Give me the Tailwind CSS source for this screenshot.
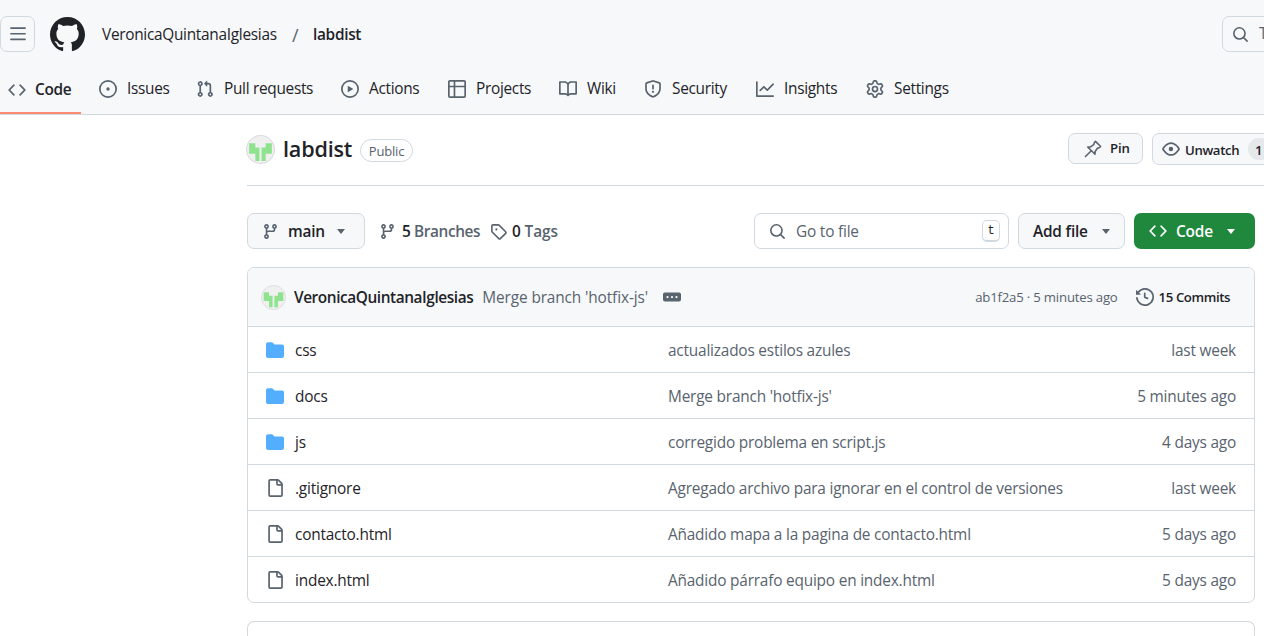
<!DOCTYPE html>
<html><head><meta charset="utf-8"><title>labdist</title>
<script src="https://cdn.jsdelivr.net/npm/@tailwindcss/browser@4"></script></head>
<body class="bg-white overflow-hidden h-[636px] w-[1264px] text-[#1f2328] text-[15.4px] font-['Open_Sans','Noto_Sans',sans-serif] tracking-[-0.2px]">
<svg width="0" height="0" class="absolute"><defs>
<symbol id="code" viewBox="0 0 16 16"><path d="m11.28 3.22 4.25 4.25a.75.75 0 0 1 0 1.06l-4.25 4.25a.749.749 0 0 1-1.275-.326.749.749 0 0 1 .215-.734L13.94 8l-3.72-3.72a.749.749 0 0 1 .326-1.275.749.749 0 0 1 .734.215Zm-6.56 0a.751.751 0 0 1 1.042.018.751.751 0 0 1 .018 1.042L2.06 8l3.72 3.72a.749.749 0 0 1-.326 1.275.749.749 0 0 1-.734-.215L.47 8.53a.75.75 0 0 1 0-1.06Z"/></symbol>
<symbol id="branch" viewBox="0 0 16 16"><path d="M9.5 3.25a2.25 2.25 0 1 1 3 2.122V6A2.5 2.5 0 0 1 10 8.5H6a1 1 0 0 0-1 1v1.128a2.251 2.251 0 1 1-1.5 0V5.372a2.25 2.25 0 1 1 1.5 0v1.836A2.493 2.493 0 0 1 6 7h4a1 1 0 0 0 1-1v-.628A2.25 2.25 0 0 1 9.5 3.25Zm-6 0a.75.75 0 1 0 1.5 0 .75.75 0 0 0-1.5 0Zm8.25-.75a.75.75 0 1 0 0 1.5.75.75 0 0 0 0-1.5ZM4.25 12a.75.75 0 1 0 0 1.5.75.75 0 0 0 0-1.5Z"/></symbol>
<symbol id="search" viewBox="0 0 16 16"><path d="M10.68 11.74a6 6 0 0 1-7.922-8.982 6 6 0 0 1 8.982 7.922l3.04 3.04a.749.749 0 0 1-.326 1.275.749.749 0 0 1-.734-.215ZM11.5 7a4.499 4.499 0 1 0-8.997 0A4.499 4.499 0 0 0 11.5 7Z"/></symbol>
<symbol id="folder" viewBox="0 0 16 16"><path d="M1.75 1A1.75 1.75 0 0 0 0 2.75v10.5C0 14.216.784 15 1.75 15h12.5A1.75 1.75 0 0 0 16 13.25v-8.5A1.75 1.75 0 0 0 14.25 3H7.5a.25.25 0 0 1-.2-.1l-.9-1.2C6.07 1.26 5.55 1 5 1H1.75Z"/></symbol>
<symbol id="file" viewBox="0 0 16 16"><path d="M2 1.75C2 .784 2.784 0 3.75 0h6.586c.464 0 .909.184 1.237.513l2.914 2.914c.329.328.513.773.513 1.237v9.586A1.75 1.75 0 0 1 13.25 16h-9.5A1.75 1.75 0 0 1 2 14.25Zm1.75-.25a.25.25 0 0 0-.25.25v12.5c0 .138.112.25.25.25h9.5a.25.25 0 0 0 .25-.25V6h-2.75A1.75 1.75 0 0 1 9 4.25V1.5Zm6.75.062V4.25c0 .138.112.25.25.25h2.688l-.011-.013-2.914-2.914-.013-.011Z"/></symbol>
<symbol id="avatar" viewBox="0 0 28 28"><circle cx="14" cy="14" r="13.5" fill="#f0f0f0" stroke="#dcdcdc"/><path d="M3 8h6v4h4v13H9v-7H3ZM25 8h-6v4h-4v13h4v-7h6Z" fill="#8fe38f"/></symbol>
</defs></svg>

<header class="bg-[#f6f8fa] border-b border-[#d1d9e0] h-[115px] flex flex-col">
  <div class="h-[68px] flex items-center [&>span]:pt-[2px]">
    <button class="w-[35px] h-[36px] ml-0 rounded-[7px] border border-[#d1d9e0] flex items-center justify-center" aria-label="menu">
      <svg class="w-[18px] h-[18px] fill-[#59636e]" viewBox="0 0 16 16"><path d="M1 2.75A.75.75 0 0 1 1.75 2h12.5a.75.75 0 0 1 0 1.5H1.75A.75.75 0 0 1 1 2.75Zm0 5A.75.75 0 0 1 1.75 7h12.5a.75.75 0 0 1 0 1.5H1.75A.75.75 0 0 1 1 7.75ZM1.75 12h12.5a.75.75 0 0 1 0 1.5H1.75a.75.75 0 0 1 0-1.5Z"/></svg>
    </button>
    <svg class="w-[35px] h-[35px] ml-[15px] fill-[#1f2328]" viewBox="0 0 16 16"><path d="M8 0c4.42 0 8 3.58 8 8a8.013 8.013 0 0 1-5.45 7.59c-.4.08-.55-.17-.55-.38 0-.27.01-1.13.01-2.2 0-.75-.25-1.23-.54-1.48 1.78-.2 3.65-.88 3.65-3.95 0-.88-.31-1.59-.82-2.15.08-.2.36-1.02-.08-2.12 0 0-.67-.22-2.2.82-.64-.18-1.32-.27-2-.27-.68 0-1.36.09-2 .27-1.53-1.03-2.2-.82-2.2-.82-.44 1.1-.16 1.92-.08 2.12-.51.56-.82 1.28-.82 2.15 0 3.06 1.86 3.75 3.64 3.95-.23.2-.44.55-.51 1.07-.46.21-1.61.55-2.33-.66-.15-.24-.6-.83-1.23-.82-.67.01-.27.38.01.53.34.19.73.9.82 1.13.16.45.68 1.31 2.69.94 0 .67.01 1.3.01 1.49 0 .21-.15.45-.55.38A7.995 7.995 0 0 1 0 8c0-4.42 3.58-8 8-8Z"/></svg>
    <span class="ml-[17px] w-[190px] tracking-[-0.29px]">VeronicaQuintanaIglesias</span>
    <span class="text-[#59636e] text-[18px] w-[21px]">/</span>
    <span class="font-semibold tracking-[-0.3px]">labdist</span>
    <div class="ml-auto w-[60px] mr-[-18px] h-[36px] rounded-[7px] border border-[#d1d9e0] flex items-center pl-[9px] gap-[10px] text-[#59636e]">
      <svg class="w-[17px] h-[17px] shrink-0 fill-[#59636e]"><use href="#search"/></svg><span>T</span>
    </div>
  </div>
  <nav class="h-[46px] flex text-[15.4px] tracking-[-0.3px]">
    <a class="w-[81px] pl-[8px] gap-[9px] flex items-center h-[46px] pb-[1px] border-b-2 border-[#fd8c73] font-semibold shrink-0">
      <svg class="w-[18px] h-[18px] fill-[#59636e] shrink-0"><use href="#code"/></svg>Code</a>
    <a class="ml-[18px] w-[97px] pb-[4px] gap-[10px] flex items-center shrink-0"><svg class="w-[18px] h-[18px] fill-[#59636e] shrink-0" viewBox="0 0 16 16"><path d="M8 9.5a1.5 1.5 0 1 0 0-3 1.5 1.5 0 0 0 0 3Z"/><path d="M8 0a8 8 0 1 1 0 16A8 8 0 0 1 8 0ZM1.5 8a6.5 6.5 0 1 0 13 0 6.5 6.5 0 0 0-13 0Z"/></svg>Issues</a>
    <a class="w-[145px] pb-[4px] gap-[10px] flex items-center shrink-0"><svg class="w-[18px] h-[18px] fill-[#59636e] shrink-0" viewBox="0 0 16 16"><path d="M1.5 3.25a2.25 2.25 0 1 1 3 2.122v5.256a2.251 2.251 0 1 1-1.5 0V5.372A2.25 2.25 0 0 1 1.5 3.25Zm5.677-.177L9.573.677A.25.25 0 0 1 10 .854V2.5h1A2.5 2.5 0 0 1 13.5 5v5.628a2.251 2.251 0 1 1-1.5 0V5a1 1 0 0 0-1-1h-1v1.646a.25.25 0 0 1-.427.177L7.177 3.427a.25.25 0 0 1 0-.354ZM3.75 2.5a.75.75 0 1 0 0 1.5.75.75 0 0 0 0-1.5Zm0 9.5a.75.75 0 1 0 0 1.5.75.75 0 0 0 0-1.5Zm8.25.75a.75.75 0 1 0 1.5 0 .75.75 0 0 0-1.5 0Z"/></svg>Pull requests</a>
    <a class="w-[107px] pb-[4px] gap-[10px] flex items-center shrink-0"><svg class="w-[18px] h-[18px] fill-[#59636e] shrink-0" viewBox="0 0 16 16"><path d="M8 0a8 8 0 1 1 0 16A8 8 0 0 1 8 0ZM1.5 8a6.5 6.5 0 1 0 13 0 6.5 6.5 0 0 0-13 0Zm4.879-2.773 4.264 2.559a.25.25 0 0 1 0 .428l-4.264 2.559A.25.25 0 0 1 6 10.559V5.442a.25.25 0 0 1 .379-.215Z"/></svg>Actions</a>
    <a class="w-[111px] pb-[4px] gap-[10px] flex items-center shrink-0"><svg class="w-[18px] h-[18px] fill-[#59636e] shrink-0" viewBox="0 0 16 16"><path d="M0 1.75C0 .784.784 0 1.75 0h12.5C15.216 0 16 .784 16 1.75v12.5A1.75 1.75 0 0 1 14.25 16H1.75A1.75 1.75 0 0 1 0 14.25ZM6.5 6.5v8h7.75a.25.25 0 0 0 .25-.25V6.5Zm8-1.5V1.75a.25.25 0 0 0-.25-.25H6.5V5Zm-13 1.5v7.75c0 .138.112.25.25.25H5v-8ZM5 5V1.5H1.75a.25.25 0 0 0-.25.25V5Z"/></svg>Projects</a>
    <a class="w-[85px] pb-[4px] gap-[10px] flex items-center shrink-0"><svg class="w-[18px] h-[18px] fill-[#59636e] shrink-0" viewBox="0 0 16 16"><path d="M0 1.75A.75.75 0 0 1 .75 1h4.253c1.227 0 2.317.59 3 1.501A3.743 3.743 0 0 1 11.006 1h4.245a.75.75 0 0 1 .75.75v10.5a.75.75 0 0 1-.75.75h-4.507a2.25 2.25 0 0 0-1.591.659l-.622.621a.75.75 0 0 1-1.06 0l-.622-.621A2.25 2.25 0 0 0 5.258 13H.75a.75.75 0 0 1-.75-.75Zm7.251 10.324.004-5.073-.002-2.253A2.25 2.25 0 0 0 5.003 2.5H1.5v9h3.757a3.75 3.75 0 0 1 1.994.574ZM8.755 4.75l-.004 7.322a3.752 3.752 0 0 1 1.992-.572H14.5v-9h-3.495a2.25 2.25 0 0 0-2.25 2.25Z"/></svg>Wiki</a>
    <a class="w-[112px] pb-[4px] gap-[10px] flex items-center shrink-0"><svg class="w-[18px] h-[18px] fill-[#59636e] shrink-0" viewBox="0 0 16 16"><path d="M7.467.133a1.748 1.748 0 0 1 1.066 0l5.25 1.68A1.75 1.75 0 0 1 15 3.48V7c0 1.566-.32 3.182-1.303 4.682-.983 1.498-2.585 2.813-5.032 3.855a1.697 1.697 0 0 1-1.33 0c-2.447-1.042-4.049-2.357-5.032-3.855C1.32 10.182 1 8.566 1 7V3.48a1.75 1.75 0 0 1 1.217-1.667Zm.61 1.429a.25.25 0 0 0-.153 0l-5.25 1.68a.25.25 0 0 0-.174.238V7c0 1.358.275 2.666 1.057 3.86.784 1.194 2.121 2.34 4.366 3.297a.196.196 0 0 0 .154 0c2.245-.956 3.582-2.104 4.366-3.298C13.225 9.666 13.5 8.36 13.5 7V3.48a.251.251 0 0 0-.174-.237l-5.25-1.68ZM8.75 4.75v3a.75.75 0 0 1-1.5 0v-3a.75.75 0 0 1 1.5 0ZM9 10.5a1 1 0 1 1-2 0 1 1 0 0 1 2 0Z"/></svg>Security</a>
    <a class="w-[110px] pb-[4px] gap-[10px] flex items-center shrink-0"><svg class="w-[18px] h-[18px] fill-[#59636e] shrink-0" viewBox="0 0 16 16"><path d="M1.5 1.75V13.5h13.75a.75.75 0 0 1 0 1.5H.75a.75.75 0 0 1-.75-.75V1.75a.75.75 0 0 1 1.5 0Zm14.28 2.53-5.25 5.25a.75.75 0 0 1-1.06 0L7 7.06 4.28 9.78a.751.751 0 0 1-1.042-.018.751.751 0 0 1-.018-1.042l3.25-3.25a.75.75 0 0 1 1.06 0L10 7.94l4.72-4.72a.751.751 0 0 1 1.042.018.751.751 0 0 1 .018 1.042Z"/></svg>Insights</a>
    <a class="pb-[4px] gap-[10px] flex items-center shrink-0"><svg class="w-[18px] h-[18px] fill-[#59636e] shrink-0" viewBox="0 0 16 16"><path d="M8 0a8.2 8.2 0 0 1 .701.031C9.444.095 9.99.645 10.16 1.29l.288 1.107c.018.066.079.158.212.224.231.114.454.243.668.386.123.082.233.09.299.071l1.103-.303c.644-.176 1.392.021 1.82.63.27.385.506.792.704 1.218.315.675.111 1.422-.364 1.891l-.814.806c-.049.048-.098.147-.088.294.016.257.016.515 0 .772-.01.147.038.246.088.294l.814.806c.475.469.679 1.216.364 1.891a7.977 7.977 0 0 1-.704 1.217c-.428.61-1.176.807-1.82.63l-1.102-.302c-.067-.019-.177-.011-.3.071a5.909 5.909 0 0 1-.668.386c-.133.066-.194.158-.211.224l-.29 1.106c-.168.646-.715 1.196-1.458 1.26a8.006 8.006 0 0 1-1.402 0c-.743-.064-1.289-.614-1.458-1.26l-.289-1.106c-.018-.066-.079-.158-.212-.224a5.738 5.738 0 0 1-.668-.386c-.123-.082-.233-.09-.299-.071l-1.103.303c-.644.176-1.392-.021-1.82-.63a8.12 8.12 0 0 1-.704-1.218c-.315-.675-.111-1.422.363-1.891l.815-.806c.05-.048.098-.147.088-.294a6.214 6.214 0 0 1 0-.772c.01-.147-.038-.246-.088-.294l-.815-.806C.635 6.045.431 5.298.746 4.623a7.92 7.92 0 0 1 .704-1.217c.428-.61 1.176-.807 1.82-.63l1.102.302c.067.019.177.011.3-.071.214-.143.437-.272.668-.386.133-.066.194-.158.211-.224l.29-1.106C6.009.645 6.556.095 7.299.03 7.53.01 7.764 0 8 0Zm-.571 1.525c-.036.003-.108.036-.137.146l-.289 1.105c-.147.561-.549.967-.998 1.189-.173.086-.34.183-.5.29-.417.278-.97.423-1.529.27l-1.103-.303c-.109-.03-.175.016-.195.045-.22.312-.412.644-.573.99-.014.031-.021.11.059.19l.815.806c.411.406.562.957.53 1.456a4.709 4.709 0 0 0 0 .582c.032.499-.119 1.05-.53 1.456l-.815.806c-.081.08-.073.159-.059.19.162.346.353.677.573.989.02.03.085.076.195.046l1.102-.303c.56-.153 1.113-.008 1.53.27.161.107.328.204.501.29.447.222.85.629.997 1.189l.289 1.105c.029.109.101.143.137.146a6.6 6.6 0 0 0 1.142 0c.036-.003.108-.036.137-.146l.289-1.105c.147-.561.549-.967.998-1.189.173-.086.34-.183.5-.29.417-.278.97-.423 1.529-.27l1.103.303c.109.029.175-.016.195-.045.22-.313.411-.644.573-.99.014-.031.021-.11-.059-.19l-.815-.806c-.411-.406-.562-.957-.53-1.456a4.709 4.709 0 0 0 0-.582c-.032-.499.119-1.05.53-1.456l.815-.806c.081-.08.073-.159.059-.19a6.464 6.464 0 0 0-.573-.989c-.02-.03-.085-.076-.195-.046l-1.102.303c-.56.153-1.113.008-1.53-.27a4.44 4.44 0 0 0-.501-.29c-.447-.222-.85-.629-.997-1.189l-.289-1.105c-.029-.11-.101-.143-.137-.146a6.6 6.6 0 0 0-1.142 0ZM11 8a3 3 0 1 1-6 0 3 3 0 0 1 6 0ZM9.5 8a1.5 1.5 0 1 0-3.001.001A1.5 1.5 0 0 0 9.5 8Z"/></svg>Settings</a>
  </nav>
</header>

<main class="ml-[247px] w-[1008px]">
  <div class="w-[1040px] h-[71px] border-b border-[#d1d9e0] flex items-start pt-[18px]">
    <svg class="w-[29px] h-[29px] shrink-0 mt-[2px] ml-[-1px]"><use href="#avatar"/></svg>
    <span class="ml-[8px] w-[68px] text-[21.6px] font-semibold leading-[32px]">labdist</span>
    <span class="ml-[9px] mt-[6px] w-[53px] h-[23px] pt-[2px] rounded-full border border-[#d1d9e0] text-[13px] font-medium text-[#59636e] flex items-center justify-center">Public</span>
    <div class="ml-auto w-[75px] h-[31px] rounded-[7px] border border-[#d1d9e0] bg-[#f6f8fa] flex items-center pl-[15px] gap-[8px] text-[13.2px] font-semibold [&>span]:pt-[1px]">
      <svg class="w-[18px] h-[18px] fill-none stroke-[#59636e] stroke-[1.4]" viewBox="0 0 16 16"><path d="M10.2 1.2 14.8 5.8 13.9 6.7 11.9 7.3 9.9 10.2 9.8 12.7 3.3 6.2 5.8 6.1 8.7 4.1 9.3 2.1ZM6.5 9.5 1.3 14.7" stroke-linejoin="round" stroke-linecap="round"/></svg><span>Pin</span></div>
    <div class="ml-[9px] w-[135px] shrink-0 h-[32px] rounded-[7px] border border-[#d1d9e0] bg-[#f6f8fa] flex items-center pl-[9px] gap-[5px] text-[13.2px] font-semibold">
      <svg class="w-[18px] h-[18px] fill-[#59636e] shrink-0" viewBox="0 0 16 16"><path d="M8 2c1.981 0 3.671.992 4.933 2.078 1.27 1.091 2.187 2.345 2.637 3.023a1.62 1.62 0 0 1 0 1.798c-.45.678-1.367 1.932-2.637 3.023C11.67 13.008 9.981 14 8 14c-1.981 0-3.671-.992-4.933-2.078C1.797 10.83.88 9.576.43 8.898a1.62 1.62 0 0 1 0-1.798c.45-.677 1.367-1.931 2.637-3.022C4.33 2.992 6.019 2 8 2ZM1.679 7.932a.12.12 0 0 0 0 .136c.411.622 1.241 1.75 2.366 2.717C5.176 11.758 6.527 12.5 8 12.5c1.473 0 2.825-.742 3.955-1.715 1.124-.967 1.954-2.096 2.366-2.717a.12.12 0 0 0 0-.136c-.412-.621-1.242-1.75-2.366-2.717C10.824 4.242 9.473 3.5 8 3.5c-1.473 0-2.825.742-3.955 1.715-1.124.967-1.954 2.096-2.366 2.717ZM8 10a2 2 0 1 1-.001-3.999A2 2 0 0 1 8 10Z"/></svg>
      <span class="w-[54px] pt-[3px] tracking-[-0.35px]">Unwatch</span><span class="ml-[4px] w-[24px] h-[22px] rounded-full bg-[#e6e9ec] pl-[7px] leading-[24px]">1</span></div>
  </div>

  <div class="mt-[27px] h-[36px] flex items-center">
    <div class="w-[118px] h-[36px] rounded-[7px] border border-[#d1d9e0] bg-[#f6f8fa] flex items-center pl-[14px] font-semibold [&>span]:pt-[2px]">
      <svg class="w-[17px] h-[17px] fill-[#59636e]"><use href="#branch"/></svg><span class="ml-[9px] w-[49px]">main</span>
      <i class="border-x-[4.5px] border-x-transparent border-t-[5px] border-t-[#59636e]"></i></div>
    <svg class="ml-[14px] w-[17px] h-[17px] fill-[#59636e]"><use href="#branch"/></svg>
    <span class="ml-[6px] w-[88px] pt-[2px] text-[#59636e] font-semibold tracking-[-0.4px]"><b class="text-[#1f2328] font-semibold">5</b> Branches</span>
    <svg class="w-[17px] h-[17px] fill-[#59636e]" viewBox="0 0 16 16"><path d="M1 7.775V2.75C1 1.784 1.784 1 2.75 1h5.025c.464 0 .91.184 1.238.513l6.25 6.25a1.75 1.75 0 0 1 0 2.474l-5.026 5.026a1.75 1.75 0 0 1-2.474 0l-6.25-6.25A1.752 1.752 0 0 1 1 7.775Zm1.5 0c0 .066.026.13.073.177l6.25 6.25a.25.25 0 0 0 .354 0l5.025-5.025a.25.25 0 0 0 0-.354l-6.25-6.25a.25.25 0 0 0-.177-.073H2.75a.25.25 0 0 0-.25.25ZM6 5a1 1 0 1 1 0 2 1 1 0 0 1 0-2Z"/></svg>
    <span class="ml-[5px] pt-[2px] text-[#59636e] font-semibold tracking-[-0.1px]"><b class="text-[#1f2328] font-semibold">0</b> Tags</span>
    <div class="ml-auto w-[255px] h-[36px] rounded-[7px] border border-[#d1d9e0] bg-white flex items-center pl-[14px] pr-[8px] text-[#59636e]">
      <svg class="w-[17px] h-[17px] fill-[#59636e]"><use href="#search"/></svg><span class="ml-[10px] pt-[2px]">Go to file</span>
      <span class="ml-auto w-[18px] h-[22px] rounded-[5px] border border-[#d1d9e0] border-b-2 text-[12px] font-['Liberation_Mono',monospace] flex items-center justify-center text-[#1f2328]">t</span></div>
    <div class="ml-[9px] w-[107px] h-[36px] rounded-[7px] border border-[#d1d9e0] bg-[#f6f8fa] flex items-center pl-[14px] font-semibold">
      <span class="w-[69px] pt-[2px]">Add file</span><i class="border-x-[4.5px] border-x-transparent border-t-[5px] border-t-[#59636e]"></i></div>
    <div class="ml-[9px] w-[121px] h-[36px] rounded-[7px] bg-[#1f883d] text-white flex items-center pl-[15px] font-semibold">
      <svg class="w-[18px] h-[18px] fill-white"><use href="#code"/></svg><span class="ml-[9px] w-[44px] pt-[2px]">Code</span><i class="ml-[7px] border-x-[4.5px] border-x-transparent border-t-[5px] border-t-white"></i></div>
  </div>

  <div class="mt-[18px] h-[336px] rounded-[7px] border border-[#d1d9e0] overflow-hidden">
    <div class="h-[59px] bg-[#f6f8fa] border-b border-[#d1d9e0] flex items-center pl-[13px] pr-[24px] [&>span]:pt-[2px]">
      <svg class="w-[25px] h-[25px] shrink-0"><use href="#avatar"/></svg>
      <span class="ml-[8px] font-semibold tracking-[-0.42px]">VeronicaQuintanaIglesias</span>
      <span class="ml-[9px] text-[#59636e] tracking-[-0.12px]">Merge branch 'hotfix-js'</span>
      <svg class="ml-[15px] w-[18px] h-[18px] fill-[#59636e]" viewBox="0 0 16 16"><path d="M0 5.75C0 4.784.784 4 1.75 4h12.5c.966 0 1.75.784 1.75 1.75v4.5A1.75 1.75 0 0 1 14.25 12H1.75A1.75 1.75 0 0 1 0 10.25ZM12 7a1 1 0 1 0 0 2 1 1 0 0 0 0-2ZM7 8a1 1 0 1 0 2 0 1 1 0 0 0-2 0ZM4 7a1 1 0 1 0 0 2 1 1 0 0 0 0-2Z"/></svg>
      <span class="ml-auto text-[13.2px] text-[#59636e]">ab1f2a5 · 5 minutes ago</span>
      <svg class="ml-[18px] w-[18px] h-[18px] fill-[#59636e]" viewBox="0 0 16 16"><path d="m.427 1.927 1.215 1.215a8.002 8.002 0 1 1-1.6 5.685.75.75 0 1 1 1.493-.154 6.5 6.5 0 1 0 1.18-4.458l1.358 1.358A.25.25 0 0 1 3.896 6H.25A.25.25 0 0 1 0 5.75V2.104a.25.25 0 0 1 .427-.177ZM7.75 4a.75.75 0 0 1 .75.75v2.992l2.028.812a.75.75 0 0 1-.557 1.392l-2.5-1A.751.751 0 0 1 7 8.25v-3.5A.75.75 0 0 1 7.75 4Z"/></svg>
      <span class="ml-[5px] text-[13.2px] font-semibold tracking-[-0.4px]">15 Commits</span>
    </div>
    <div class="h-[46px] border-b border-[#d1d9e0] flex items-center pl-[18px] pr-[18px] [&>span]:pt-[2px]"><svg class="w-[18px] h-[18px] fill-[#54aeff] shrink-0"><use href="#folder"/></svg><span class="ml-[11px] w-[373px]">css</span><span class="text-[#59636e]">actualizados estilos azules</span><span class="ml-auto text-[#59636e]">last week</span></div>
    <div class="h-[46px] border-b border-[#d1d9e0] flex items-center pl-[18px] pr-[18px] [&>span]:pt-[2px]"><svg class="w-[18px] h-[18px] fill-[#54aeff] shrink-0"><use href="#folder"/></svg><span class="ml-[11px] w-[373px]">docs</span><span class="text-[#59636e]">Merge branch 'hotfix-js'</span><span class="ml-auto text-[#59636e]">5 minutes ago</span></div>
    <div class="h-[46px] border-b border-[#d1d9e0] flex items-center pl-[18px] pr-[18px] [&>span]:pt-[2px]"><svg class="w-[18px] h-[18px] fill-[#54aeff] shrink-0"><use href="#folder"/></svg><span class="ml-[11px] w-[373px]">js</span><span class="text-[#59636e]">corregido problema en script.js</span><span class="ml-auto text-[#59636e]">4 days ago</span></div>
    <div class="h-[46px] border-b border-[#d1d9e0] flex items-center pl-[18px] pr-[18px] [&>span]:pt-[2px]"><svg class="w-[18px] h-[18px] fill-[#59636e] shrink-0"><use href="#file"/></svg><span class="ml-[11px] w-[373px]">.gitignore</span><span class="text-[#59636e]">Agregado archivo para ignorar en el control de versiones</span><span class="ml-auto text-[#59636e]">last week</span></div>
    <div class="h-[46px] border-b border-[#d1d9e0] flex items-center pl-[18px] pr-[18px] [&>span]:pt-[2px]"><svg class="w-[18px] h-[18px] fill-[#59636e] shrink-0"><use href="#file"/></svg><span class="ml-[11px] w-[373px]">contacto.html</span><span class="text-[#59636e]">Añadido mapa a la pagina de contacto.html</span><span class="ml-auto text-[#59636e]">5 days ago</span></div>
    <div class="h-[46px] flex items-center pl-[18px] pr-[18px] [&>span]:pt-[2px]"><svg class="w-[18px] h-[18px] fill-[#59636e] shrink-0"><use href="#file"/></svg><span class="ml-[11px] w-[373px]">index.html</span><span class="text-[#59636e]">Añadido párrafo equipo en index.html</span><span class="ml-auto text-[#59636e]">5 days ago</span></div>
  </div>
  <div class="mt-[18px] h-[15px] rounded-t-[7px] border border-b-0 border-[#d1d9e0]"></div>
</main>
</body></html>
